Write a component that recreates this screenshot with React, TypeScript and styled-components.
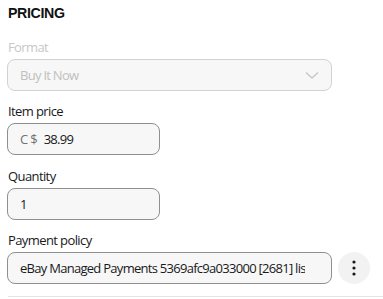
import React from "react";
import styled, { createGlobalStyle } from "styled-components";

const Global = createGlobalStyle`
  html, body { margin: 0; padding: 0; background: #fff; }
  body { font-family: "Open Sans", "Liberation Sans", sans-serif; color: #191919; }
  * { box-sizing: border-box; }
`;

const Page = styled.div`
  width: 383px;
  height: 299px;
  overflow: hidden;
  padding: 6px 0 0 7px;
  display: flex;
  flex-direction: column;
`;

const Heading = styled.h2`
  margin: 0 0 0 1px;
  font-family: "Liberation Sans", Arial, sans-serif;
  font-size: 14.2px;
  font-weight: 700;
  line-height: 14px;
  letter-spacing: -0.35px;
  color: #111;
`;

const Field = styled.div<{ $top: number }>`
  display: flex;
  flex-direction: column;
  margin-top: ${(p) => p.$top}px;
`;

const Label = styled.label<{ $disabled?: boolean }>`
  font-size: 13px;
  line-height: 18px;
  margin: 0 0 3px 1px;
  letter-spacing: -0.6px;
  color: ${(p) => (p.$disabled ? "#c7c7c7" : "#191919")};
`;

const Row = styled.div`
  display: flex;
  align-items: center;
  gap: 6px;
`;

const Box = styled.div<{ $width: number; $disabled?: boolean; $padRight?: number }>`
  width: ${(p) => p.$width}px;
  height: 32px;
  border: 1px solid ${(p) => (p.$disabled ? "#d2d2d2" : "#8f8f8f")};
  border-radius: 8px;
  background: #f7f7f7;
  display: flex;
  align-items: center;
  padding: 0 ${(p) => p.$padRight ?? 12}px 0 12px;
  font-size: 13px;
  letter-spacing: -0.72px;
  color: ${(p) => (p.$disabled ? "#c0c0c0" : "#191919")};
  overflow: hidden;
  white-space: nowrap;
`;

const Prefix = styled.span`
  color: #707070;
  letter-spacing: 2px;
  margin-right: 4px;
`;

const Value = styled.span`
  flex: 1;
  overflow: hidden;
`;

const Chevron = styled.svg`
  width: 16px;
  height: 16px;
  margin-right: -1px;
  flex-shrink: 0;
`;

const MoreButton = styled.button`
  width: 32px;
  height: 32px;
  border-radius: 50%;
  border: none;
  background: #f2f2f2;
  display: flex;
  align-items: center;
  justify-content: center;
  padding: 0;
`;

const Divider = styled.div`
  margin-top: 12px;
  margin-left: 1px;
  height: 1px;
  background: #e5e5e5;
`;

export default function App() {
  return (
    <>
      <Global />
      <Page>
        <Heading>PRICING</Heading>
        <Field $top={18}>
          <Label $disabled>Format</Label>
          <Box $width={325} $disabled>
            <Value>Buy It Now</Value>
            <Chevron viewBox="0 0 16 16">
              <path d="M2 5.5 L8 11 L14 5.5" fill="none" stroke="#c7c7c7" strokeWidth="1.4" />
            </Chevron>
          </Box>
        </Field>
        <Field $top={11}>
          <Label>Item price</Label>
          <Box $width={153}>
            <Prefix>C$</Prefix>
            <Value>38.99</Value>
          </Box>
        </Field>
        <Field $top={12}>
          <Label>Quantity</Label>
          <Box $width={153}>
            <Value>1</Value>
          </Box>
        </Field>
        <Field $top={11}>
          <Label>Payment policy</Label>
          <Row>
            <Box $width={325} $padRight={26}>
              <Value>eBay Managed Payments 5369afc9a033000 [2681] listings</Value>
            </Box>
            <MoreButton aria-label="More">
              <svg width="4" height="16" viewBox="0 0 4 16">
                <circle cx="2" cy="2" r="1.6" fill="#191919" />
                <circle cx="2" cy="8" r="1.6" fill="#191919" />
                <circle cx="2" cy="14" r="1.6" fill="#191919" />
              </svg>
            </MoreButton>
          </Row>
        </Field>
        <Divider />
      </Page>
    </>
  );
}
